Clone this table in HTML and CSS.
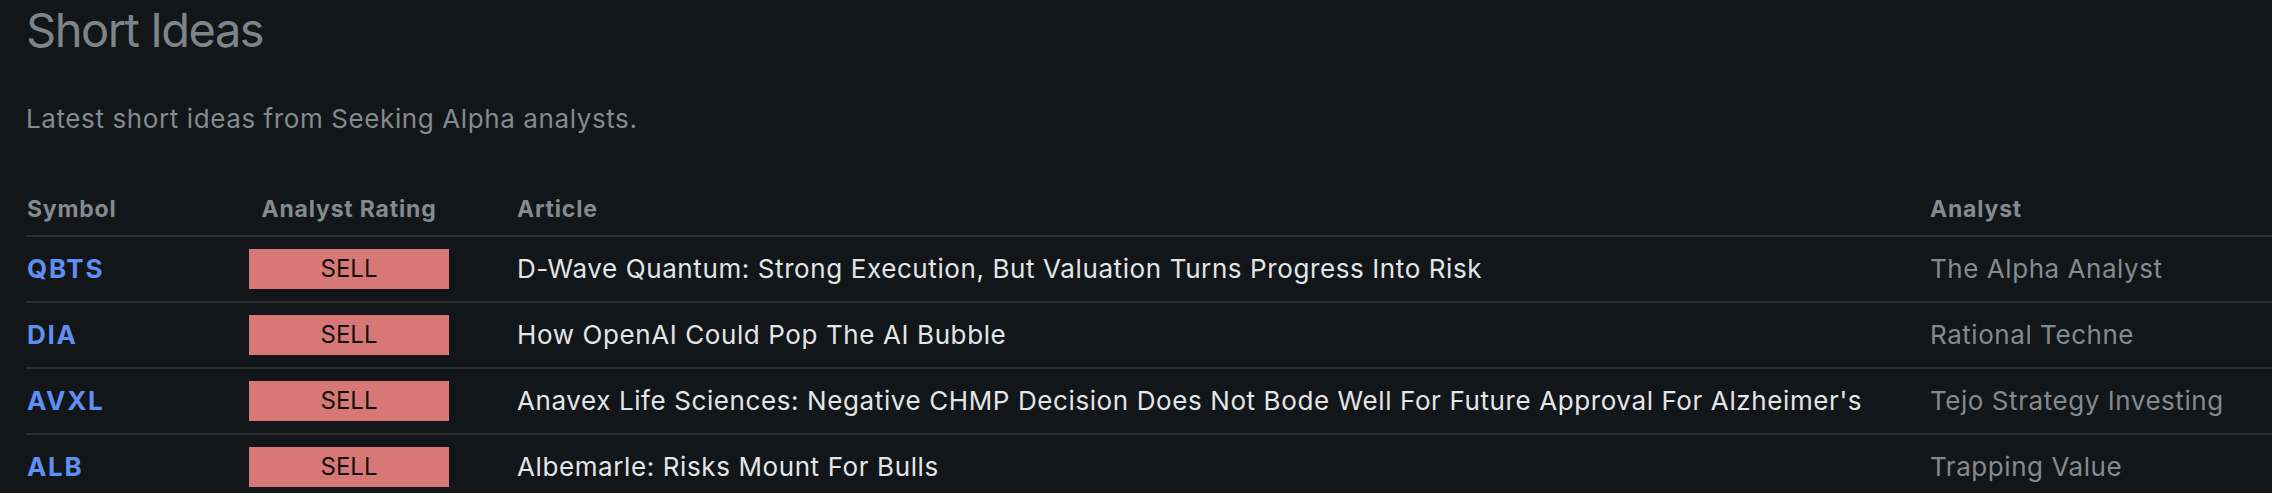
FILE: index.html
```html
<!DOCTYPE html>
<html lang="en">
<head>
<meta charset="utf-8">
<title>Short Ideas</title>
<link rel="stylesheet" href="styles.css">
</head>
<body>
<main class="page">
  <h1 class="title">Short Ideas</h1>
  <p class="subtitle">Latest short ideas from Seeking Alpha analysts.</p>
  <div class="table">
    <div class="row head">
      <div class="cell sym">Symbol</div>
      <div class="cell rating">Analyst Rating</div>
      <div class="cell article">Article</div>
      <div class="cell analyst">Analyst</div>
    </div>
    <div class="row">
      <div class="cell sym"><a class="ticker" href="#">QBTS</a></div>
      <div class="cell rating"><span class="badge">SELL</span></div>
      <div class="cell article">D-Wave Quantum: Strong Execution, But Valuation Turns Progress Into Risk</div>
      <div class="cell analyst">The Alpha Analyst</div>
    </div>
    <div class="row">
      <div class="cell sym"><a class="ticker" href="#">DIA</a></div>
      <div class="cell rating"><span class="badge">SELL</span></div>
      <div class="cell article">How OpenAI Could Pop The AI Bubble</div>
      <div class="cell analyst">Rational Techne</div>
    </div>
    <div class="row">
      <div class="cell sym"><a class="ticker" href="#">AVXL</a></div>
      <div class="cell rating"><span class="badge">SELL</span></div>
      <div class="cell article">Anavex Life Sciences: Negative CHMP Decision Does Not Bode Well For Future Approval For Alzheimer's</div>
      <div class="cell analyst">Tejo Strategy Investing</div>
    </div>
    <div class="row">
      <div class="cell sym"><a class="ticker" href="#">ALB</a></div>
      <div class="cell rating"><span class="badge">SELL</span></div>
      <div class="cell article">Albemarle: Risks Mount For Bulls</div>
      <div class="cell analyst">Trapping Value</div>
    </div>
  </div>
</main>
</body>
</html>
```

FILE: styles.css
```css
html, body {
  margin: 0;
  padding: 0;
  background: #131619;
}
body {
  font-family: Inter, "Noto Sans", sans-serif;
}
.page {
  padding-left: 26px;
}
.title {
  margin: 0;
  padding-top: 2px;
  font-size: 47px;
  line-height: 56px;
  font-weight: 400;
  color: #7f8487;
  letter-spacing: -1.5px;
}
.subtitle {
  margin: 46px 0 0;
  font-size: 26px;
  line-height: 30px;
  color: #858a8e;
  letter-spacing: 0.6px;
}
.table {
  margin-top: 63px;
}
.row {
  display: grid;
  grid-template-columns: 223px 200px 1481px 1fr;
  align-items: center;
  height: 66px;
  border-bottom: 2px solid #2a2d31;
  box-sizing: border-box;
}
.row.head {
  height: auto;
  align-items: end;
  padding-bottom: 13px;
  font-size: 23px;
  line-height: 25px;
  font-weight: 700;
  color: #858a8e;
  letter-spacing: 0.8px;
}
.cell {
  white-space: nowrap;
}
.sym {
  padding-left: 1px;
}
.row:not(.head) .cell {
  font-size: 26px;
  line-height: 30px;
  letter-spacing: 0.6px;
}
.rating {
  text-align: center;
}
.article {
  padding-left: 68px;
}
.row:not(.head) .article {
  color: #e4e5e6;
}
.row:not(.head) .analyst {
  color: #858a8e;
  letter-spacing: 0.55px;
}
.ticker {
  color: #5f8ff2;
  font-weight: 700;
  letter-spacing: 1.7px;
  text-decoration: none;
}
.row:not(.head) .badge {
  display: flex;
  align-items: center;
  justify-content: center;
  height: 40px;
  background: #d87876;
  color: #111;
  font-size: 24px;
  letter-spacing: 0;
}
```
